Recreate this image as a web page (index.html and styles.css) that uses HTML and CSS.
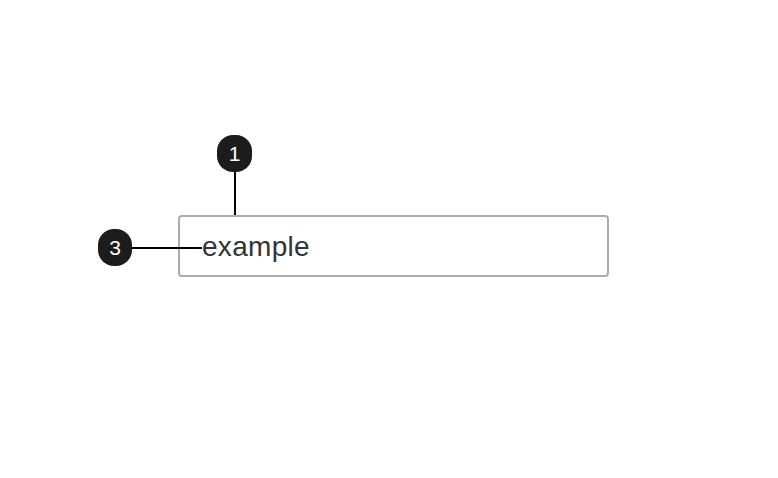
FILE: index.html
```html
<!DOCTYPE html>
<html lang="en">
<head>
  <meta charset="UTF-8">
  <title>Field callouts</title>
  <link rel="stylesheet" href="styles.css">
</head>
<body>

  <div class="stage">
    <div class="field">example</div>

    <div class="callout callout-top">1</div>
    <div class="callout callout-left">3</div>
  </div>

</body>
</html>
```

FILE: styles.css
```css
body {
  margin: 0;
  padding: 0;
  background: #fff;
  font-family: 'Liberation Sans', Arial, sans-serif;
}

.stage {
  position: relative;
  width: 778px;
  height: 478px;
  padding-top: 215px;
  padding-left: 178px;
  box-sizing: border-box;
}

.field {
  width: 431px;
  height: 62px;
  box-sizing: border-box;
  border: 2px solid #acacac;
  border-radius: 4px;
  padding: 2px 0 0 22px;
  display: flex;
  align-items: center;
  font-size: 28px;
  letter-spacing: 0.3px;
  color: #333;
}

.callout {
  position: absolute;
  background: #1c1c1c;
  color: #fff;
  border-radius: 16px;
  display: flex;
  align-items: center;
  justify-content: center;
  font-size: 21px;
}

.callout::after {
  content: "";
  position: absolute;
  background: #000;
}

.callout-top {
  left: 217px;
  top: 135px;
  width: 35px;
  height: 37px;
}

.callout-top::after {
  left: 17px;
  top: 37px;
  width: 2px;
  height: 43px;
}

.callout-left {
  left: 98px;
  top: 229px;
  width: 34px;
  height: 37px;
}

.callout-left::after {
  left: 34px;
  top: 18px;
  width: 70px;
  height: 2px;
}
```
